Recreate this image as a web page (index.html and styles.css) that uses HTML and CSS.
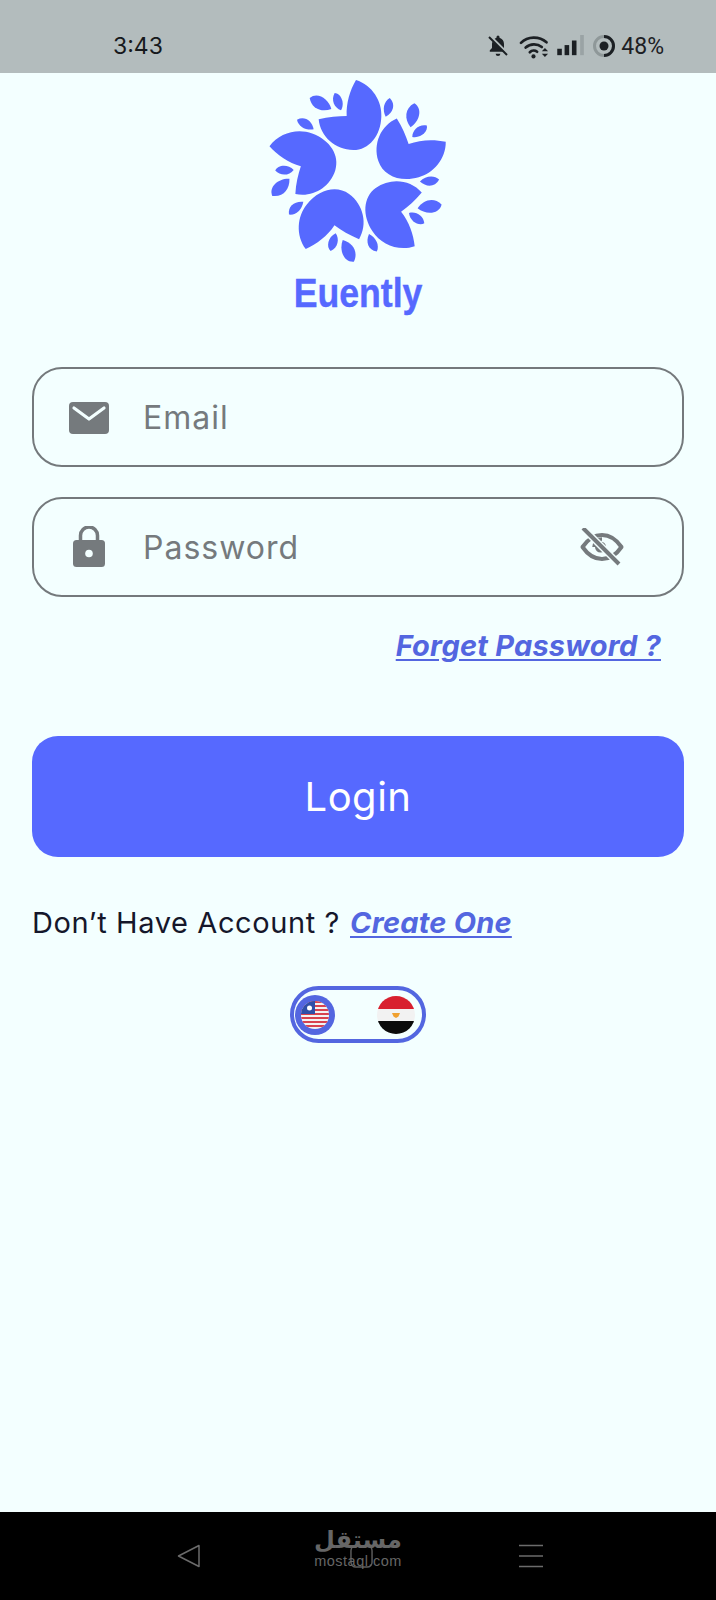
FILE: index.html
```html
<!DOCTYPE html>
<html lang="en">
<head>
<meta charset="utf-8">
<title>Evently Login</title>
<link rel="stylesheet" href="styles.css">
</head>
<body>
<div class="screen">
  <header class="status">
    <span class="time">3:43</span>
    <div class="status-icons">
      <svg class="i-bell" viewBox="0 0 24 24"><path fill="#1c2024" d="M12 22a2.4 2.4 0 0 0 2.4-2.2H9.6A2.4 2.4 0 0 0 12 22zM19 17.8H3.8v-1.500l2.2-2.200v-4c0-1 .2-1.900.6-2.700L19 18zM18 14.100V10c0-3-1.800-5.400-4.500-6.200V3a1.500 1.500 0 0 0-3 0v.8c-.7.2-1.300.5-1.800.9z"/><path stroke="#1c2024" stroke-width="2" d="M3 3l18 18"/></svg>
      <svg class="i-wifi" viewBox="0 0 28 24"><g fill="none" stroke="#1c2024" stroke-width="2.600" stroke-linecap="round"><path d="M1.500 8.500C8 2 19 2 26 8"/><path d="M6 13c4.500-4 11-4 15.500-.5"/><path d="M10 17.500c2-2 5-2 7-.5"/></g><circle cx="13.500" cy="21.500" r="2" fill="#1c2024"/><path fill="#1c2024" d="M24.500 13.500l3 3h-6zM21.500 19h6l-3 3z"/></svg>
      <svg class="i-signal" viewBox="0 0 30 24"><rect x="0" y="15" width="5" height="7" fill="#1c2024"/><rect x="8" y="11" width="5" height="11" fill="#1c2024"/><rect x="16" y="6" width="5" height="16" fill="#1c2024"/><rect x="25" y="0" width="4" height="22" fill="#9aa3a5"/></svg>
      <svg class="i-ring" viewBox="0 0 24 24"><circle cx="12" cy="12" r="9.500" fill="none" stroke="#8f9899" stroke-width="3"/><path d="M12 2.500a9.500 9.500 0 0 1 0 19" fill="none" stroke="#1c2024" stroke-width="3"/><circle cx="12" cy="12" r="4.500" fill="#1c2024"/></svg>
      <span class="battery">48%</span>
    </div>
  </header>

  <main class="content">
    <div class="brand">
      <svg class="flower" viewBox="0 9 708 600" aria-hidden="true">
        <defs>
          <g id="unit" fill="#5669ff">
            <path d="M348 30C397 45 427 95 424 140C422 197 387 240 340 240C286 240 241 200 236 148C265 140 295 138 320 138C318 100 330 60 348 30Z"/>
            <path d="M209 84C232 64 266 86 274 117C245 128 214 116 209 84Z"/>
            <path d="M284 69C302 70 316 98 303 121C283 114 272 90 284 69Z"/>
            <path d="M171 149C195 137 216 153 221 178C198 182 175 170 171 149Z"/>
          </g>
        </defs>
        <use href="#unit"/>
        <use href="#unit" transform="rotate(72 355 308)"/>
        <use href="#unit" transform="rotate(144 355 308)"/>
        <use href="#unit" transform="rotate(216 355 308)"/>
        <use href="#unit" transform="rotate(288 355 308)"/>
      </svg>
      <div class="wordmark">Euently</div>
    </div>

    <div class="field">
      <svg class="ficon i-mail" viewBox="0 0 40 32"><path fill="#757a7d" d="M4 0h32a4 4 0 0 1 4 4v24a4 4 0 0 1-4 4H4a4 4 0 0 1-4-4V4a4 4 0 0 1 4-4z"/><path fill="none" stroke="#f3ffff" stroke-width="3.200" stroke-linecap="round" stroke-linejoin="round" d="M5 6l15 11 15-11"/></svg>
      <span class="placeholder">Email</span>
    </div>

    <div class="field field-pass">
      <svg class="ficon i-lock" viewBox="0 0 32 41"><path fill="none" stroke="#757a7d" stroke-width="3.500" d="M7.500 16V9.500a8.500 8.500 0 0 1 17 0V16"/><rect y="14" width="32" height="27" rx="3.500" fill="#757a7d"/><circle cx="16" cy="27.500" r="3.800" fill="#f3ffff"/></svg>
      <span class="placeholder">Password</span>
      <svg class="i-eye" viewBox="0 0 44 38"><g fill="none" stroke="#757a7d"><path stroke-width="4" stroke-linejoin="round" d="M2.500 19C8 11 15 7 22 7s14 4 19.500 12C36 27 29 31 22 31S8 27 2.500 19z"/><path stroke-width="3.500" d="M14 19a8 8 0 0 1 8-8"/></g><circle cx="20.500" cy="19" r="5.500" fill="#757a7d"/><path stroke="#f3ffff" stroke-width="7" d="M4 1l36 36"/><path stroke="#757a7d" stroke-width="4" d="M3 0l36 36"/></svg>
    </div>

    <div class="forgot-row"><a class="link forgot">Forget Password ?</a></div>

    <button class="login">Login</button>

    <p class="signup"><span>Don’t Have Account ?</span> <a class="link create">Create One</a></p>

    <div class="toggle">
      <span class="thumb">
        <svg class="flag-us" viewBox="0 0 28 28"><defs><clipPath id="cu"><circle cx="14" cy="14" r="14"/></clipPath></defs><g clip-path="url(#cu)"><rect width="28" height="28" fill="#f3f3f3"/><g fill="#d8434f"><rect y="0" width="28" height="2"/><rect y="4" width="28" height="2"/><rect y="8" width="28" height="2"/><rect y="12" width="28" height="2"/><rect y="16" width="28" height="2"/><rect y="20" width="28" height="2"/><rect y="24" width="28" height="2"/></g><rect width="14" height="13" fill="#2f4fa8"/><circle cx="8.500" cy="7" r="2.500" fill="#fff"/></g></svg>
      </span>
      <svg class="flag-eg" viewBox="0 0 38 38"><defs><clipPath id="ce"><circle cx="19" cy="19" r="19"/></clipPath></defs><g clip-path="url(#ce)"><rect width="38" height="13" fill="#d8202f"/><rect y="13" width="38" height="12" fill="#f2f2f2"/><rect y="25" width="38" height="13" fill="#0b0b0b"/></g><path d="M15 17h8l-1.500 3.500L19 22l-2.500-1.500z" fill="#f0a030"/></svg>
    </div>
  </main>

  <nav class="navbar">
    <svg class="nav-back" viewBox="0 0 24 24"><path fill="none" stroke="#6b6b6b" stroke-width="1.500" stroke-linejoin="round" d="M22 1.500v21L1.500 12z"/></svg>
    <svg class="nav-home" viewBox="0 0 24 24"><rect x="1" y="1" width="22" height="22" rx="5" fill="none" stroke="#5f5f5f" stroke-width="1.500"/></svg>
    <svg class="nav-menu" viewBox="0 0 24 24"><path stroke="#6b6b6b" stroke-width="1.500" d="M0 1.500h24M0 12h24M0 22.500h24"/></svg>
    <div class="watermark">
      <span class="wm-ar">مستقل</span>
      <span class="wm-en">mostaql.com</span>
    </div>
  </nav>
</div>
</body>
</html>
```

FILE: styles.css
```css
* { box-sizing: border-box; }
html, body { margin: 0; padding: 0; }
body { font-family: Inter, "Liberation Sans", sans-serif; background: #f3ffff; }
.screen { width: 716px; height: 1600px; display: flex; flex-direction: column; overflow: hidden; }

.status { height: 73px; background: #b3bcbd; display: flex; align-items: center; justify-content: space-between; padding: 19px 52px 0 113px; flex: none; }
.time { font-size: 23px; color: #16191c; }
.status-icons { display: flex; align-items: center; }
.status-icons svg { display: block; }
.i-bell { width: 24px; height: 24px; margin-right: 9px; }
.i-wifi { width: 30px; height: 25px; margin-right: 8px; }
.i-signal { width: 28px; height: 22px; margin-right: 7px; }
.i-ring { width: 24px; height: 24px; margin-right: 5px; }
.battery { font-family: Roboto, sans-serif; font-size: 23px; color: #1c2024; }

.content { flex: 1; padding: 0 32px; display: flex; flex-direction: column; }
.brand { display: flex; flex-direction: column; align-items: center; margin-bottom: 49px; }
.flower { width: 236px; height: 200px; display: block; }
.wordmark { font-family: "Liberation Sans", sans-serif; font-weight: 700; font-size: 41px; line-height: 50px; color: #5669ff; margin-top: -5px; height: 50px; transform: scaleX(.87); -webkit-text-stroke: .4px #5669ff; }

.field { height: 100px; border: 2px solid #74797c; border-radius: 30px; display: flex; align-items: center; position: relative; padding-left: 109px; }
.field-pass { margin-top: 30px; }
.ficon { position: absolute; display: block; }
.i-mail { left: 35px; top: 33px; width: 40px; height: 32px; }
.i-lock { left: 39px; top: 27px; width: 32px; height: 41px; }
.placeholder { font-size: 32px; color: #757a7d; letter-spacing: 1px; }
.i-eye { width: 44px; height: 38px; margin-left: auto; margin-right: 58px; display: block; }

.forgot-row { display: flex; justify-content: flex-end; padding-right: 23px; margin-top: 32px; }
.link { color: #5366e0; font-weight: 700; font-style: italic; text-decoration: underline; text-underline-offset: 3px; font-size: 29px; line-height: 34px; letter-spacing: .2px; }

.login { display: block; width: 100%; height: 121px; margin-top: 73px; border: 0; border-radius: 26px; background: #5669ff; color: #fff; font-family: Inter, sans-serif; font-size: 40px; letter-spacing: .5px; }

.signup { margin: 49px 0 0; display: flex; align-items: center; gap: 10px; color: #15172b; font-size: 29px; line-height: 34px; letter-spacing: .6px; }
.signup span { white-space: nowrap; }

.toggle { width: 136px; height: 57px; margin: 46px auto 0; border: 4px solid #5366e0; border-radius: 29px; display: flex; align-items: center; justify-content: space-between; padding: 0 7px 0 1px; }
.thumb { width: 40px; height: 40px; border-radius: 50%; background: #5366e0; display: flex; align-items: center; justify-content: center; }
.flag-us { width: 28px; height: 28px; display: block; }
.flag-eg { width: 38px; height: 38px; display: block; }

.navbar { height: 88px; background: #000; flex: none; position: relative; display: flex; align-items: center; padding-left: 177px; }
.navbar svg { display: block; flex: none; }
.nav-back { width: 24px; height: 24px; }
.nav-home { width: 23px; height: 23px; margin-left: 149px; }
.nav-menu { width: 24px; height: 24px; margin-left: 146px; }
.watermark { position: absolute; left: 315px; top: 15px; width: 86px; display: flex; flex-direction: column; align-items: center; color: #666; }
.wm-ar { font-family: "DejaVu Sans", sans-serif; font-weight: 700; font-size: 24px; line-height: 27px; height: 27px; white-space: nowrap; overflow: visible; }
.wm-en { font-family: "Liberation Sans", sans-serif; font-size: 14.500px; line-height: 14px; letter-spacing: .5px; white-space: nowrap; }
```
